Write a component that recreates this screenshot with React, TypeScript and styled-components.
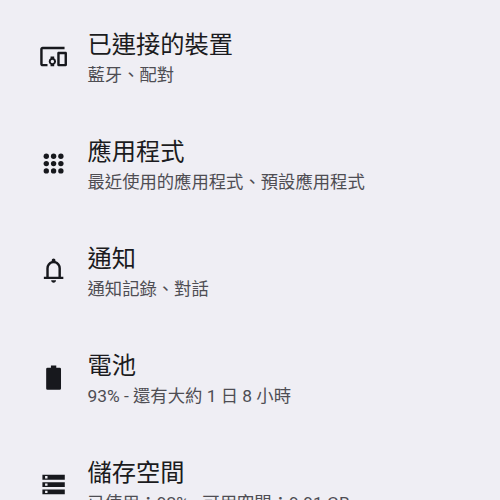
import React from "react";
import styled, { createGlobalStyle } from "styled-components";

const GlobalStyle = createGlobalStyle`
  html, body { margin: 0; background: #efeef4; overflow: hidden; }
`;

const Screen = styled.main`
  box-sizing: border-box;
  width: 500px;
  height: 500px;
  overflow: hidden;
  padding-top: 3px;
  background: #efeef4;
  color: #1b1b20;
  font-family: Roboto, "Noto Sans CJK TC", sans-serif;
`;

const Row = styled.div`
  display: flex;
  align-items: center;
  height: 107px;
  padding-left: 39px;
`;

const Icon = styled.svg`
  flex: none;
  width: 29.2px;
  height: 29.2px;
  margin-right: 19.3px;
  fill: #17181d;
`;

const Labels = styled.div`
  display: flex;
  flex-direction: column;
  padding-top: 3px;
  white-space: nowrap;
`;

const Title = styled.div`
  font-size: 24.25px;
  line-height: 34px;
`;

const Summary = styled.div`
  font-size: 17.33px;
  line-height: 26px;
  color: #4e4d53;
`;

const dots = [6, 12, 18];

const items = [
  {
    title: "已連接的裝置",
    summary: "藍牙、配對",
    icon: (
      <path
        fillRule="evenodd"
        d="M3 6h18V4H3c-1.1 0-2 .9-2 2v12c0 1.1.9 2 2 2h4v-2H3ZM9.5 12h3v1.4a3 3 0 0 1 0 5.2V20h-3v-1.4a3 3 0 0 1 0-5.2ZM11 14.6a1.4 1.4 0 1 0 0 2.8 1.4 1.4 0 1 0 0-2.8ZM22 8h-6c-.5 0-1 .5-1 1v10c0 .5.5 1 1 1h6c.5 0 1-.5 1-1V9c0-.5-.5-1-1-1zm-1 10h-4v-8h4Z"
      />
    ),
  },
  {
    title: "應用程式",
    summary: "最近使用的應用程式、預設應用程式",
    icon: dots.flatMap((y) => dots.map((x) => <circle key={`${x}-${y}`} cx={x} cy={y} r={2.2} />)),
  },
  {
    title: "通知",
    summary: "通知記錄、對話",
    icon: (
      <path d="M4 19v-2h2v-7q0-2.075 1.25-3.6875T10.5 4.2v-.7q0-.625.4375-1.0625T12 2t1.0625.4375T13.5 3.5v.7q2 .5 3.25 2.1125T18 10v7h2v2Zm8 3q-.825 0-1.4125-.5875T10 20h4q0 .825-.5875 1.4125T12 22Zm-4-5h8v-7q0-1.65-1.175-2.825T12 6 9.175 7.175 8 10Z" />
    ),
  },
  {
    title: "電池",
    summary: "93% - 還有大約 1 日 8 小時",
    icon: <path d="M7 22q-1.1 0-1.1-1V5q0-1 1.1-1h2.8V2h4.4v2H17q1.1 0 1.1 1v16q0 1-1.1 1Z" />,
  },
  {
    title: "儲存空間",
    summary: "已使用：92% - 可用空間：9.91 GB",
    icon: (
      <path
        fillRule="evenodd"
        d="M2.8 20v-4h18.4v4ZM5 19h2v-2H5ZM2.8 8V4h18.4v4ZM5 7h2V5H5Zm-2.2 7v-4h18.4v4ZM5 13h2v-2H5Z"
      />
    ),
  },
];

export default function App() {
  return (
    <>
      <GlobalStyle />
      <Screen>
        {items.map((item) => (
          <Row key={item.title}>
            <Icon viewBox="0 0 24 24">{item.icon}</Icon>
            <Labels>
              <Title>{item.title}</Title>
              <Summary>{item.summary}</Summary>
            </Labels>
          </Row>
        ))}
      </Screen>
    </>
  );
}
